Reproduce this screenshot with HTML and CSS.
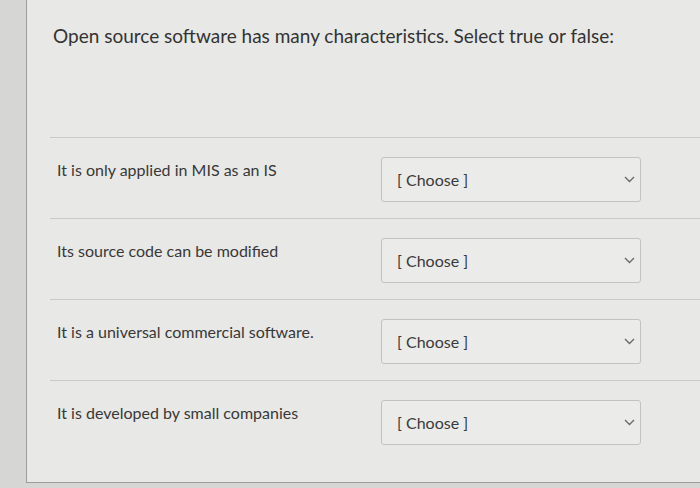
FILE: index.html
```html
<!DOCTYPE html>
<html>
	<head>
		<meta charset="utf-8">
		<title>Quiz question</title>
		<link rel="stylesheet" href="styles.css">
	</head>
	<body>
		<div class="frame">
			<p class="question-text">Open source software has many characteristics. Select true or false:</p>
			<div class="answers">
				<div class="answer-row">
					<span class="answer-label">It is only applied in MIS as an IS</span>
					<div class="choose">
						<span>[ Choose ]</span>
						<svg width="11" height="7" viewBox="0 0 11 7"><path d="M1 1l4.5 4.5 4.5-4.5" fill="none" stroke="#6a6a6a" stroke-width="1.4"/></svg>
					</div>
				</div>
				<div class="answer-row">
					<span class="answer-label">Its source code can be modified</span>
					<div class="choose">
						<span>[ Choose ]</span>
						<svg width="11" height="7" viewBox="0 0 11 7"><path d="M1 1l4.5 4.5 4.5-4.5" fill="none" stroke="#6a6a6a" stroke-width="1.4"/></svg>
					</div>
				</div>
				<div class="answer-row">
					<span class="answer-label">It is a universal commercial software.</span>
					<div class="choose">
						<span>[ Choose ]</span>
						<svg width="11" height="7" viewBox="0 0 11 7"><path d="M1 1l4.5 4.5 4.5-4.5" fill="none" stroke="#6a6a6a" stroke-width="1.4"/></svg>
					</div>
				</div>
				<div class="answer-row">
					<span class="answer-label">It is developed by small companies</span>
					<div class="choose">
						<span>[ Choose ]</span>
						<svg width="11" height="7" viewBox="0 0 11 7"><path d="M1 1l4.5 4.5 4.5-4.5" fill="none" stroke="#6a6a6a" stroke-width="1.4"/></svg>
					</div>
				</div>
			</div>
		</div>
	</body>
</html>
```
FILE: styles.css
```css
*{margin:0;padding:0;box-sizing:border-box;}
html,body{height:100%;}
body{background:#d6d6d4;font-family:Lato,"Open Sans",sans-serif;color:#2f2f2f;overflow:hidden;}

.frame{margin-left:26px;width:700px;height:483px;background:#e8e8e6;border-left:1px solid #9d9d9b;border-bottom:1px solid #9d9d9b;padding-left:23px;}

.question-text{font-size:19px;line-height:24px;padding-top:24px;padding-left:3px;height:137px;color:#333;}

.answer-row{display:flex;align-items:flex-start;height:81px;border-top:1px solid #c9c9c7;padding-left:7px;}
.answer-label{width:324px;font-size:16px;line-height:20px;padding-top:22px;color:#383838;}
.choose{display:flex;align-items:center;justify-content:space-between;width:260px;height:45px;margin-top:19px;border:1px solid #c2c2c0;border-radius:3px;background:#ebebe9;padding:0 5px 0 15px;font-size:16px;color:#3a3a3a;}
```
